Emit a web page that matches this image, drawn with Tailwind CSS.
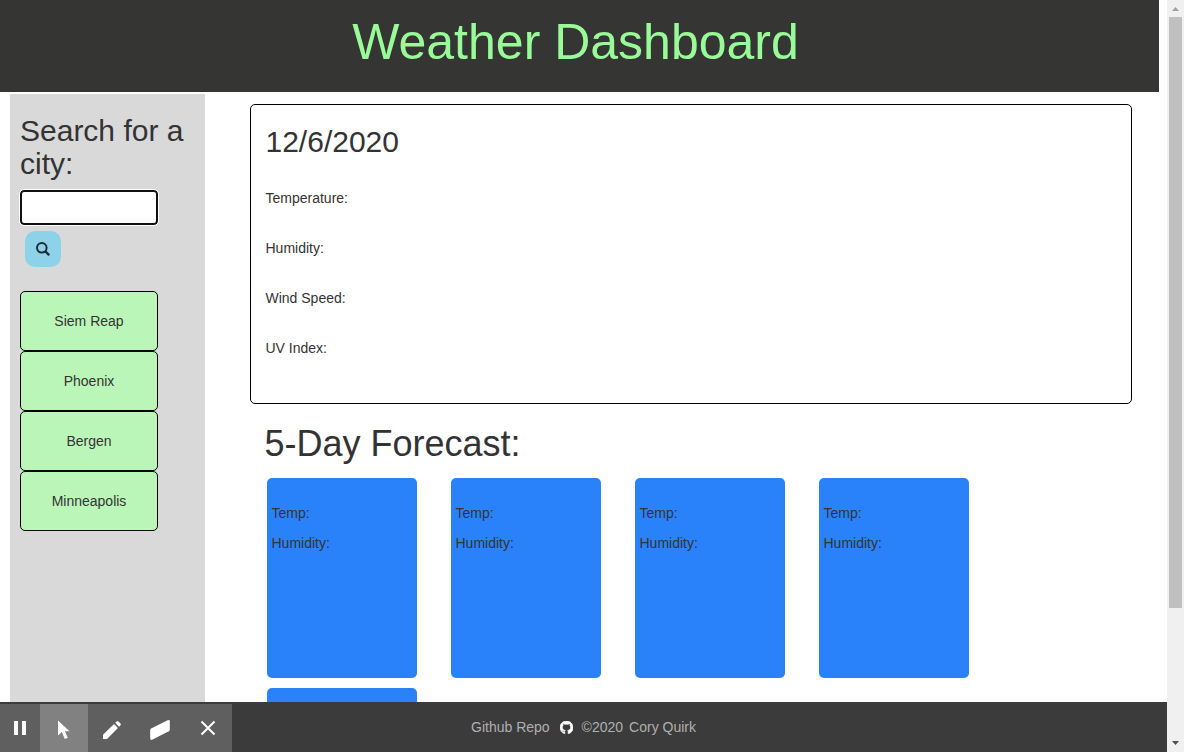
<!DOCTYPE html>
<html lang="en">
<head>
<meta charset="utf-8">
<title>Weather Dashboard</title>
<script src="https://cdn.jsdelivr.net/npm/@tailwindcss/browser@4"></script>
</head>
<body class="h-[752px] w-[1184px] overflow-hidden bg-white font-['Liberation_Sans',Arial,sans-serif] text-[14px] leading-5 text-[#333]">
<div class="flex h-full">
  <div class="flex w-[1167px] flex-col">
    <header class="flex h-[92px] w-[1159px] shrink-0 justify-center bg-[#353533] pt-[15px] pr-[8px]">
      <h1 class="text-[50px] leading-[55px] text-[#98fb98]">Weather Dashboard</h1>
    </header>
    <div class="flex min-h-0 flex-1 overflow-hidden pt-[2px] pl-[10px]">
      <aside class="h-full w-[195px] shrink-0 bg-[#d9d9d9] pt-5 pl-[10px]">
        <h2 class="text-[30px] leading-[33px]">Search for a<br>city:</h2>
        <input type="text" class="mt-[10px] block h-[35px] w-[138px] rounded-[4px] border-2 border-[#101010] bg-white px-3 outline outline-white">
        <button class="mt-[6px] ml-[5px] flex h-9 w-9 items-center justify-center rounded-[10px] bg-[#8ed2e9]">
          <svg class="h-[14px] w-[14px]" viewBox="0 0 14 14" fill="none" stroke="#1c2c33"><circle cx="5.8" cy="5.8" r="4.8" stroke-width="2"/><path d="M9 9L13.2 13.2" stroke-width="2.4"/></svg>
        </button>
        <ul class="mt-6 w-[138px] text-center leading-[58px]">
          <li class="h-[60px] rounded-[5px] border border-black bg-[#bbf6b9]">Siem Reap</li>
          <li class="h-[60px] rounded-[5px] border border-black bg-[#bbf6b9]">Phoenix</li>
          <li class="h-[60px] rounded-[5px] border border-black bg-[#bbf6b9]">Bergen</li>
          <li class="h-[60px] rounded-[5px] border border-black bg-[#bbf6b9]">Minneapolis</li>
        </ul>
      </aside>
      <main class="ml-[45px] w-[882px] shrink-0 pt-[10px]">
        <section class="h-[300px] rounded-[5px] border border-black pt-5 pl-[14.5px]">
          <h2 class="text-[30px] leading-[33px]">12/6/2020</h2>
          <div class="mt-[30px] flex flex-col gap-[30px]">
            <p>Temperature:</p>
            <p>Humidity:</p>
            <p>Wind Speed:</p>
            <p>UV Index:</p>
          </div>
        </section>
        <h1 class="mt-5 ml-[14.5px] text-[36px] leading-10">5-Day Forecast:</h1>
        <div class="mt-[14px] ml-[17px] grid grid-cols-[repeat(4,150px)] gap-x-[34px] gap-y-[10px]">
          <div class="flex h-[200px] flex-col gap-[10px] rounded-[5px] bg-[#2a82fa] pt-[25px] pl-[4.5px]"><p>Temp:</p><p>Humidity:</p></div>
          <div class="flex h-[200px] flex-col gap-[10px] rounded-[5px] bg-[#2a82fa] pt-[25px] pl-[4.5px]"><p>Temp:</p><p>Humidity:</p></div>
          <div class="flex h-[200px] flex-col gap-[10px] rounded-[5px] bg-[#2a82fa] pt-[25px] pl-[4.5px]"><p>Temp:</p><p>Humidity:</p></div>
          <div class="flex h-[200px] flex-col gap-[10px] rounded-[5px] bg-[#2a82fa] pt-[25px] pl-[4.5px]"><p>Temp:</p><p>Humidity:</p></div>
          <div class="h-[200px] rounded-[5px] bg-[#2a82fa]"></div>
        </div>
      </main>
    </div>
    <footer class="flex h-[50px] shrink-0 bg-[#3b3b3b] text-[#b0b0b0]">
      <div class="mt-[2px] flex w-[232px] bg-[#5f5f5f]">
        <div class="flex w-10 items-center justify-center"><svg class="h-4 w-4" viewBox="0 0 16 16" fill="#fff"><path d="M2 1h4v14H2zM10 1h4v14h-4z"/></svg></div>
        <div class="w-12 bg-[#818181] pt-[16px] pl-[17px]"><svg class="h-5 w-4" viewBox="0 0 16 20" fill="#fff"><path d="M1 0.5V15.5L4.8 12L7.8 19L10.8 17.7L7.9 11.2H12.5Z"/></svg></div>
        <div class="w-12 pt-[16px] pl-[14px]"><svg class="h-5 w-5" viewBox="0 0 20 20" fill="#fff"><path d="M1 19V14.8L12 4L15.9 7.9L5 19ZM13.2 2.8L14.6 1.5Q15.5 .7 16.4 1.5L18.5 3.6Q19.3 4.5 18.5 5.3L17.1 6.7Z"/></svg></div>
        <div class="w-12 pt-[15px] pl-[14px]"><svg class="h-[22px] w-5" viewBox="0 0 20 22" fill="#fff"><path d="M.2 11.3Q.2 10.2 1.1 9.6L17.6 1.3Q19.8 .3 19.8 2.2V10.5Q19.8 11.7 18.8 12.3L2.6 20.6Q.2 21.6 .2 19.5Z"/></svg></div>
        <div class="flex w-12 items-center justify-center"><svg class="h-4 w-4" viewBox="0 0 16 16" fill="none" stroke="#fff" stroke-width="2"><path d="M1.5 1.5l13 13M14.5 1.5l-13 13"/></svg></div>
      </div>
      <div class="flex h-[50px] items-center pl-[239px]">
        <span>Github Repo</span>
        <svg class="mr-[9px] ml-[10px] h-[13px] w-[13px]" viewBox="0 0 16 16" fill="#fff" stroke="#fff" stroke-width=".8"><path d="M8 0C3.58 0 0 3.58 0 8c0 3.54 2.29 6.53 5.47 7.59.4.07.55-.17.55-.38 0-.19-.01-.82-.01-1.49-2.01.37-2.53-.49-2.69-.94-.09-.23-.48-.94-.82-1.13-.28-.15-.68-.52-.01-.53.63-.01 1.08.58 1.23.82.72 1.21 1.87.87 2.33.66.07-.52.28-.87.51-1.07-1.78-.2-3.64-.89-3.64-3.95 0-.87.31-1.59.82-2.15-.08-.2-.36-1.02.08-2.12 0 0 .67-.21 2.2.82a7.6 7.6 0 0 1 4 0c1.53-1.04 2.2-.82 2.2-.82.44 1.1.16 1.92.08 2.12.51.56.82 1.27.82 2.15 0 3.07-1.87 3.75-3.65 3.95.29.25.54.73.54 1.48 0 1.07-.01 1.93-.01 2.2 0 .21.15.46.55.38A8 8 0 0 0 16 8c0-4.42-3.58-8-8-8Z"/></svg>
        <span>©2020</span><span class="ml-[6px]">Cory Quirk</span>
      </div>
    </footer>
  </div>
  <div class="flex w-[17px] flex-col items-center bg-[#f0f0f0]">
    <svg class="h-[17px] w-[17px] shrink-0" viewBox="0 0 17 17" fill="#a0a0a0"><path d="M5 11L8.5 7L12 11Z"/></svg>
    <div class="h-[591px] w-[13px] bg-[#c0c0c0]"></div>
    <svg class="mt-auto h-[17px] w-[17px] shrink-0" viewBox="0 0 17 17" fill="#505050"><path d="M5 6L8.5 10L12 6Z"/></svg>
  </div>
</div>
</body>
</html>
